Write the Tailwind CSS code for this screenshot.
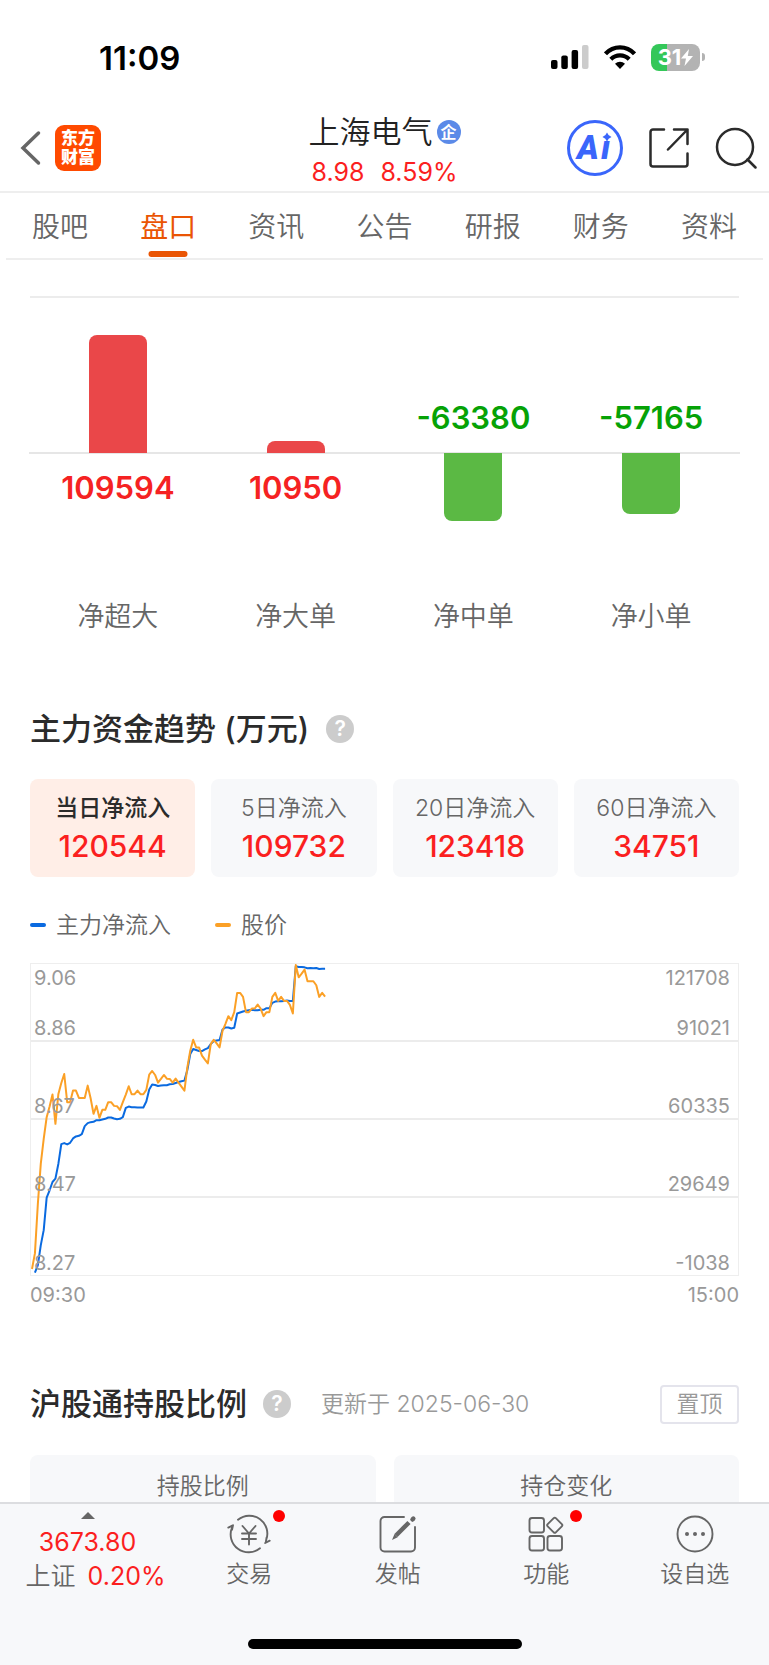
<!DOCTYPE html>
<html lang="zh-CN">
<head>
    <meta charset="UTF-8">
    <meta name="viewport" content="width=device-width, initial-scale=1.0">
    <title>上海电气 盘口</title>
    <script src="https://cdn.jsdelivr.net/npm/@tailwindcss/browser@4"></script>
</head>
<body class="bg-white text-[#666] font-['Inter','Noto_Sans_CJK_SC',sans-serif]">
<div class="h-screen flex flex-col overflow-hidden">

    <!-- status bar -->
    <div class="h-[104px] shrink-0 flex items-start justify-between pt-10 pl-[99px] pr-16 text-black">
        <div class="text-[33px] leading-9 font-semibold">11:09</div>
        <div class="h-[34px] flex items-center gap-[15px]">
            <svg class="w-[38px] h-6" viewBox="0 0 38 24" aria-hidden="true">
                <rect x="0" y="15" width="6.5" height="9" rx="2"/>
                <rect x="10.3" y="10.500" width="6.5" height="13.500" rx="2"/>
                <rect x="20.600" y="5" width="6.500" height="19" rx="2"/>
                <rect x="31" y="0" width="6.500" height="24" rx="2" fill="#ccc"/>
            </svg>
            <svg class="w-8 h-6" viewBox="0 0 32 24" fill="none" stroke="#000" stroke-width="4.200" aria-hidden="true">
                <path d="M1.500 8.800C9.500 .3 22.500 .3 30.500 8.800"/>
                <path d="M6.800 14.300c5.200-5.200 13.200-5.200 18.400 0"/>
                <path d="M16 24l-5-5.200c2.800-2.900 7.200-2.900 10 0z" fill="#000" stroke="none"/>
            </svg>
            <div class="flex items-center gap-0.5">
                <div class="w-[49px] h-[27px] rounded-lg flex items-center justify-center text-white text-[22px] font-bold bg-linear-to-r from-[#34c759] from-32% to-[#b3b3b3] to-32%">31<svg class="w-3 h-[17px]" viewBox="0 0 12 17" fill="#fff" aria-hidden="true"><path d="M8 0L0 9.500h5L3.500 17 12 7H6.800z"/></svg></div>
                <div class="w-[3px] h-2 rounded-r bg-[#b3b3b3]"></div>
            </div>
        </div>
    </div>

    <!-- stock header -->
    <header class="h-[89px] shrink-0 grid grid-cols-[1fr_auto_1fr] items-center border-b-2 border-[#eee] pl-3 pr-3">
        <div class="flex items-center gap-3.5 pl-2">
            <button type="button" aria-label="返回">
                <svg class="w-[21px] h-9" viewBox="0 0 21 36" fill="none" stroke="#666" stroke-width="3.500" stroke-linecap="round"><path d="M18.500 3L3 18l15.500 15"/></svg>
            </button>
            <a href="#" class="w-[46px] h-[46px] rounded-[9px] bg-[#ff4a00] text-white text-[17px] leading-[19px] font-black flex flex-col items-center justify-center"><span>东方</span><span>财富</span></a>
        </div>
        <div class="text-center pt-1.5">
            <h1 class="flex items-center justify-center gap-1 text-[31px] leading-[42px] font-[350] text-[#222]">上海电气<span class="w-6 h-6 rounded-full bg-[#5b8ae8] text-white text-[16px] leading-6 font-bold">企</span></h1>
            <div class="flex justify-center gap-4 text-[25px] leading-[38px] text-[#fb1f1f]"><span>8.98</span><span>8.59%</span></div>
        </div>
        <div class="flex items-center justify-end gap-[26px]">
            <button type="button" aria-label="Ai">
                <svg class="w-14 h-14" viewBox="0 0 56 56" fill="#3a66fb" aria-hidden="true">
                    <circle cx="28" cy="28" r="26.500" fill="none" stroke="#3a66fb" stroke-width="3"/>
                    <text x="10" y="39" font-family="Roboto" font-size="33" font-weight="900" font-style="italic">A<tspan x="34">ı</tspan></text>
                    <path d="M40 12.500q1.200 3.300 4.500 4.500-3.300 1.200-4.500 4.500-1.200-3.300-4.500-4.500 3.300-1.200 4.500-4.500z"/>
                </svg>
            </button>
            <button type="button" aria-label="分享">
                <svg class="w-10 h-10" viewBox="0 0 40 40" fill="none" stroke="#2b2b2b" stroke-width="2.500" stroke-linecap="round" stroke-linejoin="round"><path d="M15 1.500H4A2.500 2.500 0 0 0 1.500 4v32A2.500 2.500 0 0 0 4 38.500h32a2.500 2.500 0 0 0 2.500-2.500V25.500M25 1.500h13.500V16M38.500 1.500L19 21.500"/></svg>
            </button>
            <button type="button" aria-label="搜索">
                <svg class="w-[42px] h-[42px]" viewBox="0 0 42 42" fill="none" stroke="#2b2b2b" stroke-width="2.500" stroke-linecap="round"><circle cx="20" cy="20" r="18"/><path d="M32.500 32.500l8 8"/></svg>
            </button>
        </div>
    </header>

    <!-- tabs -->
    <nav class="mx-1.5 h-[67px] shrink-0 grid grid-cols-7 border-b-2 border-[#eee] text-center text-[28px] leading-[68px] font-[350]">
        <a href="#">股吧</a>
        <a href="#" class="relative font-normal text-[#ea5504]">盘口<span class="absolute left-1/2 -translate-x-1/2 bottom-1 w-[39px] h-1.5 rounded-full bg-[#ea5504]"></span></a>
        <a href="#">资讯</a>
        <a href="#">公告</a>
        <a href="#">研报</a>
        <a href="#">财务</a>
        <a href="#">资料</a>
    </nav>

    <main class="flex-1 min-h-0 overflow-hidden px-[30px] pt-9">
        <!-- net inflow by order size -->
        <section class="border-t-2 border-[#ececec]">
            <div class="-mx-px grid grid-cols-4 text-[31px] leading-9 font-semibold text-center">
                <div class="h-[156px] flex flex-col items-center justify-end border-b-2 border-[#e6e6e6]"><div class="w-[58px] h-[118px] -mb-px rounded-t-lg bg-[#ea4749]"></div></div>
                <div class="h-[156px] flex flex-col items-center justify-end border-b-2 border-[#e6e6e6]"><div class="w-[58px] h-3 -mb-px rounded-t-lg bg-[#ea4749]"></div></div>
                <div class="h-[156px] flex flex-col items-center justify-end border-b-2 border-[#e6e6e6] pb-4 text-[#06a206]">-63380</div>
                <div class="h-[156px] flex flex-col items-center justify-end border-b-2 border-[#e6e6e6] pb-4 text-[#06a206]">-57165</div>
                <div class="h-[145px] pt-4 text-[#f52222]">109594</div>
                <div class="h-[145px] pt-4 text-[#f52222]">10950</div>
                <div class="h-[145px]"><div class="mx-auto w-[58px] h-[68px] -mt-px rounded-b-lg bg-[#5bb944]"></div></div>
                <div class="h-[145px]"><div class="mx-auto w-[58px] h-[61px] -mt-px rounded-b-lg bg-[#5bb944]"></div></div>
            </div>
            <div class="-mx-px grid grid-cols-4 text-center text-[27px] leading-9 font-[350]">
                <div>净超大</div>
                <div>净大单</div>
                <div>净中单</div>
                <div>净小单</div>
            </div>
        </section>

        <!-- main capital trend -->
        <section class="pt-[74px]">
            <div class="flex items-center gap-[17px]">
                <h2 class="text-[31px] leading-10 font-medium text-[#2b2b2b]">主力资金趋势 (万元)</h2>
                <button type="button" aria-label="说明" class="w-7 h-7 rounded-full bg-[#ccc] text-white text-[21px] leading-7 font-semibold">?</button>
            </div>
            <div class="mt-[30px] grid grid-cols-4 gap-4 text-center">
                <button type="button" class="h-[98px] rounded-lg bg-[#ffeee7]">
                    <span class="block text-[23px] leading-9 font-medium text-[#2b2b2b]">当日净流入</span>
                    <span class="block text-[30px] leading-10 font-medium text-[#fb1f1f]">120544</span>
                </button>
                <button type="button" class="h-[98px] rounded-lg bg-[#f7f8fa]">
                    <span class="block text-[23px] leading-9 font-[350]">5日净流入</span>
                    <span class="block text-[30px] leading-10 font-medium text-[#fb1f1f]">109732</span>
                </button>
                <button type="button" class="h-[98px] rounded-lg bg-[#f7f8fa]">
                    <span class="block text-[23px] leading-9 font-[350]">20日净流入</span>
                    <span class="block text-[30px] leading-10 font-medium text-[#fb1f1f]">123418</span>
                </button>
                <button type="button" class="h-[98px] rounded-lg bg-[#f7f8fa]">
                    <span class="block text-[23px] leading-9 font-[350]">60日净流入</span>
                    <span class="block text-[30px] leading-10 font-medium text-[#fb1f1f]">34751</span>
                </button>
            </div>
            <div class="mt-[30px] flex gap-11 text-[23px] leading-9 font-[350]">
                <div class="flex items-center gap-2.5"><span class="w-4 h-1 rounded-full bg-[#0a6ae0]"></span>主力净流入</div>
                <div class="flex items-center gap-2.5"><span class="w-4 h-1 rounded-full bg-[#fba026]"></span>股价</div>
            </div>

            <!-- lines sit above the grid rules and below the axis labels -->
            <div class="relative mt-5 border border-[#eee] text-[20px] leading-6 text-[#999] [&_span]:relative">
                <svg class="absolute inset-0 w-full h-full" viewBox="28 39 2130 936" preserveAspectRatio="none" fill="none" stroke-width="2" stroke-linejoin="round" aria-hidden="true">
                    <polyline id="inflow" stroke="#0a6ae0" vector-effect="non-scaling-stroke"/>
                    <polyline id="price" stroke="#fba026" vector-effect="non-scaling-stroke"/>
                </svg>
                <div class="h-[78px] pt-0.5 pl-[3px] pr-2 border-b-2 border-[#ececec] flex flex-col justify-between">
                    <div class="flex justify-between"><span>9.06</span><span>121708</span></div>
                    <div class="flex justify-between"><span>8.86</span><span>91021</span></div>
                </div>
                <div class="h-[78px] pl-[3px] pr-2 border-b-2 border-[#ececec] flex items-end justify-between"><span>8.67</span><span>60335</span></div>
                <div class="h-[78px] pl-[3px] pr-2 border-b-2 border-[#ececec] flex items-end justify-between"><span>8.47</span><span>29649</span></div>
                <div class="h-[77px] pl-[3px] pr-2 flex items-end justify-between"><span>8.27</span><span>-1038</span></div>
            </div>
            <div class="mt-1.5 flex justify-between text-[20px] leading-[26px] text-[#999]"><span>09:30</span><span>15:00</span></div>
        </section>

        <!-- northbound holding -->
        <section class="pt-[76px]">
            <div class="flex items-center">
                <h2 class="text-[31px] leading-10 font-medium text-[#2b2b2b]">沪股通持股比例</h2>
                <button type="button" aria-label="说明" class="ml-4 w-7 h-7 rounded-full bg-[#ccc] text-white text-[21px] leading-7 font-semibold">?</button>
                <span class="ml-[30px] text-[23px] font-[350] text-[#999]">更新于 2025-06-30</span>
                <button type="button" class="ml-auto w-[79px] h-[39px] rounded-sm border-2 border-[#e4e4ec] text-[23px] leading-8 font-[350] text-[#999]">置顶</button>
            </div>
            <div class="mt-[31px] grid grid-cols-2 gap-[18px] text-center text-[23px] leading-9 font-[350]">
                <div class="h-40 rounded-lg bg-[#f7f8fa] pt-[13px]">持股比例</div>
                <div class="h-40 rounded-lg bg-[#f7f8fa] pt-[13px]">持仓变化</div>
            </div>
        </section>
    </main>

    <!-- bottom bar -->
    <footer class="h-[163px] shrink-0 flex flex-col justify-between border-t-2 border-[#dcdde0] bg-[#f7f8fa] pb-4">
        <div class="flex text-center text-[23px] leading-[34px] font-[350]">
            <a href="#" class="w-[175px] pt-2 flex flex-col items-center text-[25px] font-normal text-[#fb1f1f]">
                <svg class="w-3.5 h-[7px]" viewBox="0 0 14 7" fill="#666" aria-hidden="true"><path d="M7 0l7 7H0z"/></svg>
                <span class="mt-1.5">3673.80</span>
                <span class="flex gap-3 pl-4"><span class="font-[350] text-[#666]">上证</span>0.20%</span>
            </a>
            <a href="#" class="relative flex-1 pt-2.5 flex flex-col items-center gap-[3px]">
                <svg class="w-11 h-10" viewBox="0 0 44 40" fill="none" stroke="#666" stroke-width="1.900" stroke-linecap="round" stroke-linejoin="round" aria-hidden="true">
                    <path d="M11 5.700A18 18 0 0 1 39 26.500M38.200 29l4.500-2.300M38.800 28.500l.8-5M33 34.300A18 18 0 0 1 5 13.500M5.800 11.300l-4.500 2.300M6 11.300l-1 4.500"/>
                    <path d="M15.500 12l6.500 7.500 6.500-7.500M15 19.500h14M15 25h14M22 19v11.500"/>
                </svg>
                <span>交易</span>
                <span class="absolute left-1/2 ml-6 top-1.5 w-3 h-3 rounded-full bg-[#f00]"></span>
            </a>
            <a href="#" class="relative flex-1 pt-2.5 flex flex-col items-center gap-[3px]">
                <svg class="w-10 h-10" viewBox="0 0 40 40" fill="none" stroke="#666" stroke-width="1.900" stroke-linecap="round" aria-hidden="true">
                    <path d="M26 3H6.500A4 4 0 0 0 2.500 7v26.500a4 4 0 0 0 4 4H33a4 4 0 0 0 4-4V13"/>
                    <path d="M31 8.500L18 21.500" stroke-width="4.500" stroke-linecap="butt"/><path d="M16.500 20l3.200 3.200L14 26z" fill="#666" stroke="none"/>
                    <path d="M34.500 5.500l.8-.8" stroke-width="4.500"/>
                </svg>
                <span>发帖</span>
            </a>
            <a href="#" class="relative flex-1 pt-2.5 flex flex-col items-center gap-[3px]">
                <svg class="w-10 h-10" viewBox="0 0 40 40" fill="none" stroke="#666" stroke-width="1.900" stroke-linejoin="round" aria-hidden="true">
                    <rect x="3.500" y="4" width="14.500" height="14.500" rx="2.500"/>
                    <rect x="3.500" y="22" width="14.500" height="14.500" rx="2.500"/>
                    <rect x="21.500" y="22" width="14.500" height="14.500" rx="2.500"/>
                    <rect x="23" y="5.500" width="11.500" height="11.500" rx="1.500" transform="rotate(45 28.750 11.250)"/>
                </svg>
                <span>功能</span>
                <span class="absolute left-1/2 ml-6 top-1.5 w-3 h-3 rounded-full bg-[#f00]"></span>
            </a>
            <a href="#" class="relative flex-1 pt-2.5 flex flex-col items-center gap-[3px]">
                <svg class="w-10 h-10" viewBox="0 0 40 40" fill="#666" aria-hidden="true">
                    <circle cx="20" cy="20" r="17.500" fill="none" stroke="#666" stroke-width="1.900"/>
                    <circle cx="12" cy="20" r="2"/><circle cx="20" cy="20" r="2"/><circle cx="28" cy="20" r="2"/>
                </svg>
                <span>设自选</span>
            </a>
        </div>
        <div class="mx-auto w-[274px] h-2.5 rounded-full bg-black"></div>
    </footer>
</div>

<script>
    // one value per minute since 09:30, measured down from the top of the plot
    const price = [957,910,760,640,565,500,468,432,520,430,397,370,455,455,420,420,442,442,442,405,443,490,466,502,478,478,455,455,466,467,478,455,432,407,431,431,420,431,431,418,372,361,373,396,385,373,384,385,396,384,396,408,420,350,300,267,290,290,315,327,338,280,267,278,290,240,219,196,208,184,126,126,138,184,184,173,173,161,173,196,184,184,138,126,150,138,150,150,162,188,42,79,68,56,91,91,91,103,138,126,137];
    const inflow = [968,945,885,840,742,720,695,685,640,581,578,582,577,564,558,556,551,527,518,515,514,509,509,507,505,501,501,504,506,505,500,472,468,470,470,471,471,471,453,417,402,403,406,405,404,404,401,400,397,394,392,390,358,310,295,298,301,301,296,292,280,271,269,268,236,230,230,233,231,188,185,182,180,178,177,178,178,177,177,172,172,156,152,151,151,150,149,150,150,46,48,48,49,52,51,52,51,54,53,53];
    function plot(id, values, start) {
        const points = values.map((y, i) => (31 + (i + start) * 8.83).toFixed(1) + ',' + y);
        document.getElementById(id).setAttribute('points', points.join(' '));
    }
    plot('inflow', inflow, 1);
    plot('price', price, 0);
</script>
</body>
</html>
